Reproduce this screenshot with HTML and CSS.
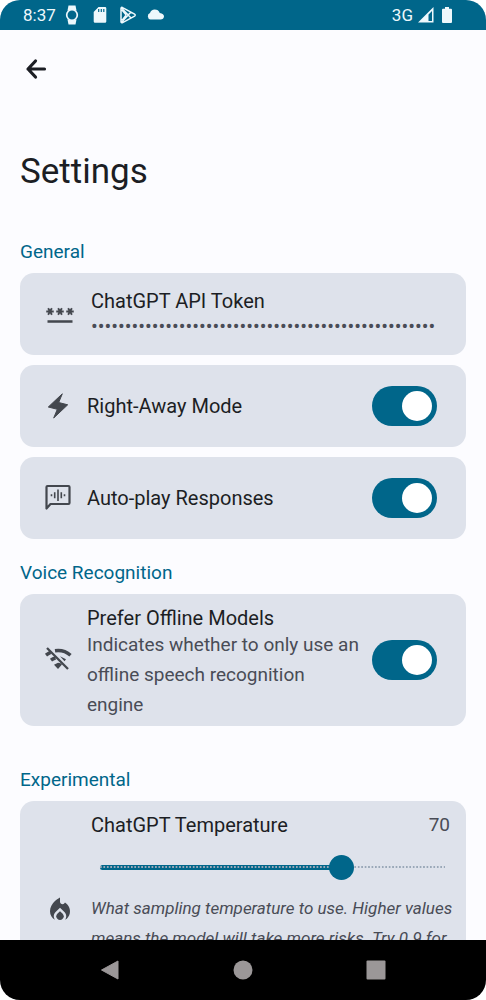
FILE: index.html
```
<!DOCTYPE html>
<html lang="en">
<head>
<meta charset="utf-8">
<meta name="viewport" content="width=device-width, initial-scale=1">
<title>Settings</title>
<link rel="stylesheet" href="styles.css">
</head>
<body>
<div class="screen">
  <header class="status-bar">
    <span class="clock">8:37</span>
    <svg class="status-icon" viewBox="0 0 20 20" aria-hidden="true"><path fill="currentColor" d="M6.500 0.500h7l1 5h-9zM5.500 14.500h9l-1 5h-7z"/><circle cx="10" cy="10" r="5.300" fill="#00668a" stroke="currentColor" stroke-width="1.700"/></svg>
    <svg class="status-icon" viewBox="0 0 20 20" aria-hidden="true"><path fill="currentColor" d="M8.500 2h6.500a1.300 1.300 0 0 1 1.300 1.300v13.200a1.300 1.300 0 0 1-1.300 1.300H5a1.300 1.300 0 0 1-1.300-1.300V7z"/><path stroke="#00668a" stroke-width="1.200" d="M8.700 4v3M11.300 4v3M13.800 4v3"/></svg>
    <svg class="status-icon" viewBox="0 0 20 20" aria-hidden="true"><path fill="none" stroke="currentColor" stroke-width="1.500" stroke-linejoin="round" d="M3 3.500v13.200c0 1 .8 1.300 1.600.9l12-6.500c.8-.5.8-1.500 0-2l-12-6.500C3.800 2 3 2.500 3 3.500zM3.500 17.200 13 7M3.500 3 13 13M8.200 10 4 5M8.200 10 4 15.500"/></svg>
    <svg class="status-icon" viewBox="0 0 20 20" aria-hidden="true"><path fill="currentColor" d="M4.500 14.500a3.400 3.400 0 0 1-.5-6.500Q5 4.600 8.700 4.500q3.700 0 5.100 3.400 4.200.5 4.200 3.600-.3 3-3.500 3z"/></svg>
    <span class="network">3G</span>
    <svg class="status-icon signal" viewBox="0 0 16 16" aria-hidden="true"><path fill="currentColor" fill-rule="evenodd" d="M0 15.500 15.500 0v15.500zM10.500 7.500v6.500h3.500V4z"/></svg>
    <svg class="status-icon battery" viewBox="0 0 10 16" aria-hidden="true"><path fill="currentColor" d="M3 0h4v1.800h2q1 0 1 1V15q0 1-1 1H1q-1 0-1-1V2.800q0-1 1-1h2z"/></svg>
  </header>

  <main class="content">
    <button class="back" type="button" aria-label="Back">
      <svg viewBox="0 0 22 22" aria-hidden="true"><path fill="none" stroke="currentColor" stroke-width="3.200" stroke-linecap="round" stroke-linejoin="round" d="M10.500 3 3 11l7.500 8M3 11h16.500"/></svg>
    </button>
    <h1 class="title">Settings</h1>

    <section class="group">
      <h2 class="group-title">General</h2>
      <div class="card card-wide">
        <svg class="icon" viewBox="0 0 24 24" aria-hidden="true"><path fill="currentColor" d="M2 17h20v2H2v-2zm1.150-4.050L4 11.470l.85 1.480 1.300-.75-.85-1.480H7v-1.500H5.300l.85-1.470L4.850 7 4 8.470 3.150 7l-1.300.75.850 1.470H1v1.500h1.700l-.85 1.480 1.300.75zm6.700-.75l1.300.75.85-1.480.85 1.480 1.300-.75-.85-1.480H15v-1.500h-1.700l.85-1.470-1.300-.75L12 8.470 11.150 7l-1.300.75.85 1.470H9v1.500h1.700l-.85 1.480zM23 9.220h-1.700l.85-1.470-1.300-.75L20 8.470 19.150 7l-1.300.75.85 1.470H17v1.500h1.700l-.85 1.480 1.300.75.85-1.480.85 1.480 1.300-.75-.85-1.480H23v-1.500z"/></svg>
        <div class="card-text">
          <h3 class="name">ChatGPT API Token</h3>
          <p class="secret">•••••••••••••••••••••••••••••••••••••••••••••••••••</p>
        </div>
      </div>
      <div class="card">
        <svg class="icon" viewBox="0 0 30 30" aria-hidden="true"><path fill="currentColor" stroke="currentColor" stroke-linejoin="round" d="M19.300 2.800 5.300 16l9 2.300-3.600 8.700 14-13.200-9-2.300z"/></svg>
        <label class="card-text name" for="right-away">Right-Away Mode</label>
        <input class="switch" id="right-away" type="checkbox" role="switch" checked>
      </div>
      <div class="card">
        <svg class="icon" viewBox="0 0 30 30" aria-hidden="true"><path fill="none" stroke="currentColor" stroke-width="2.200" stroke-linejoin="round" d="M3.500 25.500V4q0-1 1-1h21q1 0 1 1v16q0 1-1 1H7.500z"/><path stroke="currentColor" stroke-width="1.600" d="M8.500 11.200v2M11.700 9.200v6M15 6.500v11.500M18.300 9.200v6M21.500 11.200v2"/></svg>
        <label class="card-text name" for="auto-play">Auto-play Responses</label>
        <input class="switch" id="auto-play" type="checkbox" role="switch" checked>
      </div>
    </section>

    <section class="group">
      <h2 class="group-title">Voice Recognition</h2>
      <div class="card card-tall">
        <svg class="icon" viewBox="0 0 30 30" aria-hidden="true"><path fill="none" stroke="currentColor" stroke-width="3.400" d="M3 10.200Q5 8.600 7.500 7.400M12 5.800Q21 4.500 27.500 10.300M8 15.200Q10 13.600 12.500 12.800"/><path fill="currentColor" d="m17 11.300 6 3-1.500 2zM15 17.800q3 0 4 1.800L15 24l-4-4.200z"/><path stroke="currentColor" stroke-width="2.300" d="m4 3 21 21"/></svg>
        <div class="card-text">
          <label class="name" for="offline">Prefer Offline Models</label>
          <p class="detail">Indicates whether to only use an<br>offline speech recognition<br>engine</p>
        </div>
        <input class="switch" id="offline" type="checkbox" role="switch" checked>
      </div>
    </section>

    <section class="group group-spaced">
      <h2 class="group-title">Experimental</h2>
      <div class="card card-wide card-slider">
        <div class="slider-head">
          <label class="name" for="temperature">ChatGPT Temperature</label>
          <output class="value" for="temperature">70</output>
        </div>
        <div class="slider">
          <div class="track"><div class="fill" style="width:70%"></div><div class="ticks"></div></div>
          <input class="range" id="temperature" type="range" min="0" max="100" value="70">
        </div>
        <svg class="icon flame" viewBox="0 0 24 24" aria-hidden="true"><path fill="currentColor" d="M12 12.900l-2.130 2.090C9.310 15.550 9 16.280 9 17.060 9 18.680 10.350 20 12 20s3-1.320 3-2.940c0-.78-.31-1.520-.87-2.070L12 12.900z"/><path fill="currentColor" d="M16 6l-.44.550C14.380 8.020 12 7.190 12 5.300V2S4 6 4 13c0 2.920 1.560 5.470 3.890 6.860C7.330 19.070 7 18.100 7 17.060c0-1.320.52-2.560 1.470-3.500L12 10.100l3.530 3.470c.95.930 1.470 2.170 1.470 3.500 0 1.020-.31 1.960-.85 2.750 1.890-1.150 3.290-3.060 3.710-5.300C20.520 11.030 18.790 7.860 16 6z"/></svg>
        <p class="hint">What sampling temperature to use. Higher values<br>means the model will take more risks. Try 0.9 for</p>
      </div>
    </section>
  </main>

  <nav class="nav-bar" aria-label="System">
    <button type="button" aria-label="Back"><svg viewBox="0 0 20 20"><path fill="currentColor" stroke="currentColor" stroke-linejoin="round" d="M1.500 10 18 1v18z"/></svg></button>
    <button type="button" aria-label="Home"><svg viewBox="0 0 20 20"><circle cx="10" cy="10" r="9.500" fill="currentColor"/></svg></button>
    <button type="button" aria-label="Overview"><svg viewBox="0 0 20 20"><rect x=".5" y=".5" width="19" height="19" rx="1" fill="currentColor"/></svg></button>
  </nav>
</div>
</body>
</html>
```
FILE: styles.css
```
:root {
  --accent: #00668a;
  --surface: #fcfcff;
  --card: #dee2eb;
  --text: #1c1e24;
  --muted: #494c56;
}

* { box-sizing: border-box; }

body {
  margin: 0;
  background: #fff;
  color: var(--text);
  font-family: Roboto, "Liberation Sans", sans-serif;
}

h1, h2, h3, p { margin: 0; font-weight: 400; }

button { border: 0; padding: 0; background: none; color: inherit; }

.screen {
  display: flex;
  flex-direction: column;
  height: 100vh;
  overflow: hidden;
  border-radius: 20px;
  background: var(--surface);
}

.status-bar {
  display: flex;
  align-items: center;
  gap: 8px;
  height: 30px;
  flex: none;
  padding: 0 34px 0 23px;
  background: var(--accent);
  color: #eef8fc;
  font-size: 17px;
}

.status-icon { width: 20px; height: 20px; }
.clock { width: 31px; }
.network { margin-left: auto; }
.signal { width: 16px; height: 16px; margin-left: -3px; }
.battery { width: 10px; height: 16px; }

.content {
  flex: 1;
  min-height: 0;
  overflow: hidden;
  padding: 19px 20px 0;
}

.back {
  display: grid;
  place-items: center;
  width: 32px;
  height: 40px;
}
.back svg { width: 22px; height: 22px; }

.title {
  margin: 61px 0 45px;
  font-size: 35px;
  line-height: 44px;
}

.group { margin-bottom: 21px; }
.group-spaced { margin-top: 41px; }

.group-title {
  margin-bottom: 8px;
  color: var(--accent);
  font-size: 19px;
  line-height: 26px;
}

.card {
  display: flex;
  align-items: center;
  gap: 14px;
  min-height: 82px;
  padding: 0 29px 0 23px;
  border-radius: 14px;
  background: var(--card);
}
.card + .card { margin-top: 10px; }
.card-wide { gap: 16px; padding: 0 10px 0 25px; }

.card-text { flex: 1; min-width: 0; }
.card-tall .card-text { padding: 12px 0 6px; }

.icon {
  flex: none;
  width: 30px;
  height: 30px;
  color: #43474e;
}

.name {
  display: block;
  font-size: 20px;
  line-height: 24px;
}

.secret {
  color: var(--muted);
  font-size: 20px;
  line-height: 26px;
  white-space: nowrap;
}

.detail {
  color: var(--muted);
  font-size: 19px;
  line-height: 30px;
  white-space: nowrap;
}

.switch {
  appearance: none;
  flex: none;
  display: flex;
  align-items: center;
  width: 65px;
  height: 40px;
  margin: 0;
  padding: 5px;
  border-radius: 20px;
  background: #8a9099;
}
.switch::before {
  content: "";
  width: 30px;
  height: 30px;
  border-radius: 50%;
  background: #fff;
}
.switch:checked { justify-content: flex-end; background: var(--accent); }

.card-slider {
  display: grid;
  grid-template-columns: 30px 1fr;
  row-gap: 0;
  padding-top: 12px;
  padding-bottom: 12px;
}

.slider-head {
  grid-column: 2;
  display: flex;
  justify-content: space-between;
  padding-right: 6px;
}
.value { color: var(--muted); font-size: 19px; line-height: 24px; }

.slider {
  grid-column: 2;
  display: grid;
  align-items: center;
  height: 56px;
  padding: 4px 11px 0 9px;
}
.track, .range { grid-area: 1 / 1; }
.track { display: grid; align-items: center; height: 5px; }
.fill, .ticks { grid-area: 1 / 1; }
.fill { height: 5px; border-radius: 3px; background: var(--accent); }
.ticks {
  height: 2px;
  background: linear-gradient(90deg, #9aa8b8 50%, transparent 50%) 0 0 / 1% 2px;
}

.range {
  appearance: none;
  width: calc(100% + 25px);
  height: 25px;
  margin: 0 -12px;
  background: transparent;
}
.range::-webkit-slider-thumb {
  appearance: none;
  width: 25px;
  height: 25px;
  border-radius: 50%;
  background: var(--accent);
}

.flame { align-self: start; margin-top: 2px; }

.hint {
  color: var(--muted);
  font-size: 17px;
  font-style: italic;
  line-height: 30px;
  white-space: nowrap;
}

.nav-bar {
  display: grid;
  grid-template-columns: repeat(3, 1fr);
  flex: none;
  height: 60px;
  padding: 0 9%;
  background: #000;
  color: #9b9798;
}
.nav-bar button { display: grid; place-items: center; }
.nav-bar svg { width: 20px; height: 20px; }
```
